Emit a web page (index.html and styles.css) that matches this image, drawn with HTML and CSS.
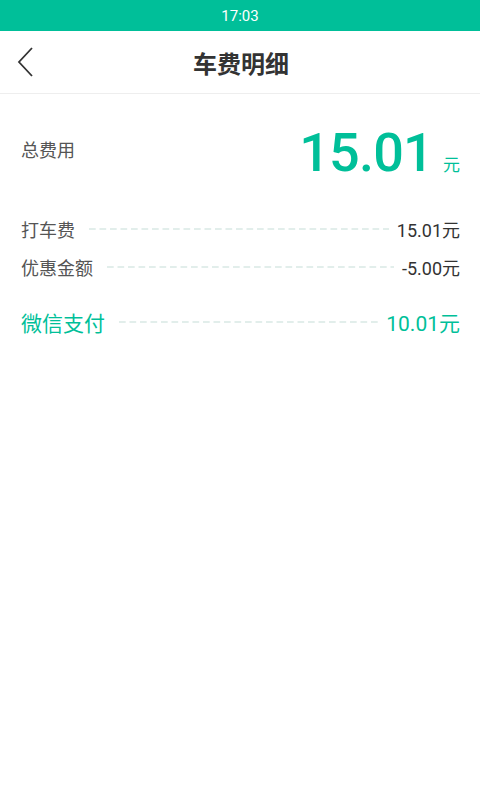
FILE: index.html
```html
<!DOCTYPE html>
<html lang="zh">
<head>
<meta charset="utf-8">
<link rel="stylesheet" href="styles.css">
</head>
<body>
<div class="status">17:03</div>
<header class="nav">
  <svg class="back" width="20" height="32" viewBox="0 0 20 32"><polyline points="16,2 3,16 16,30" fill="none" stroke="#333" stroke-width="1.8"/></svg>
  <div class="title">车费明细</div>
</header>
<section class="total">
  <div class="total-label">总费用</div>
  <div class="total-amount"><span class="big">15.01</span><span class="unit">元</span></div>
</section>
<section class="rows">
  <div class="row"><span class="label">打车费</span><span class="dash"></span><span class="value">15.01元</span></div>
  <div class="row"><span class="label">优惠金额</span><span class="dash"></span><span class="value">-5.00元</span></div>
  <div class="row pay"><span class="label">微信支付</span><span class="dash"></span><span class="value">10.01元</span></div>
</section>
</body>
</html>
```
FILE: styles.css
```css
html, body { margin: 0; padding: 0; background: #fff; }
body { width: 480px; height: 800px; font-family: Roboto, "Noto Sans CJK SC", sans-serif; }
.status { height: 31px; background: #00bf99; color: #fff; font-size: 15px; display: flex; align-items: center; justify-content: center; }
.nav { height: 62px; border-bottom: 1px solid #eeeeee; display: flex; align-items: center; justify-content: center; position: relative; }
.back { position: absolute; left: 16px; top: 15px; }
.title { font-family: "Noto Sans CJK SC", sans-serif; font-size: 24px; font-weight: 700; color: #333; margin-left: 2px; }
.total { display: flex; align-items: center; justify-content: space-between; padding: 0 20px 0 21px; height: 116px; }
.total-label { font-family: "Noto Sans CJK SC", sans-serif; font-size: 18px; color: #555; margin-top: -6px; }
.total-amount { display: flex; align-items: baseline; color: #00bf99; }
.big { font-family: Roboto, sans-serif; font-size: 54px; font-weight: 500; letter-spacing: -0.8px; }
.unit { font-family: "Noto Sans CJK SC", sans-serif; font-size: 17px; margin-left: 10px; }
.rows { padding: 0 20px 0 21px; }
.row { display: flex; align-items: center; height: 38px; }
.label { font-family: "Noto Sans CJK SC", sans-serif; font-size: 18px; color: #555; }
.value { font-family: Roboto, "Noto Sans CJK SC", sans-serif; font-size: 18px; color: #333; }
.dash { flex: 1; height: 2px; margin: 0 8px 0 14px; background-image: linear-gradient(to right, #e2eeeb 60%, transparent 60%); background-size: 10.5px 2px; background-repeat: repeat-x; }
.row.pay { margin-top: 16px; height: 40px; }
.row.pay .label, .row.pay .value { color: #00bf99; font-size: 21px; }
```
